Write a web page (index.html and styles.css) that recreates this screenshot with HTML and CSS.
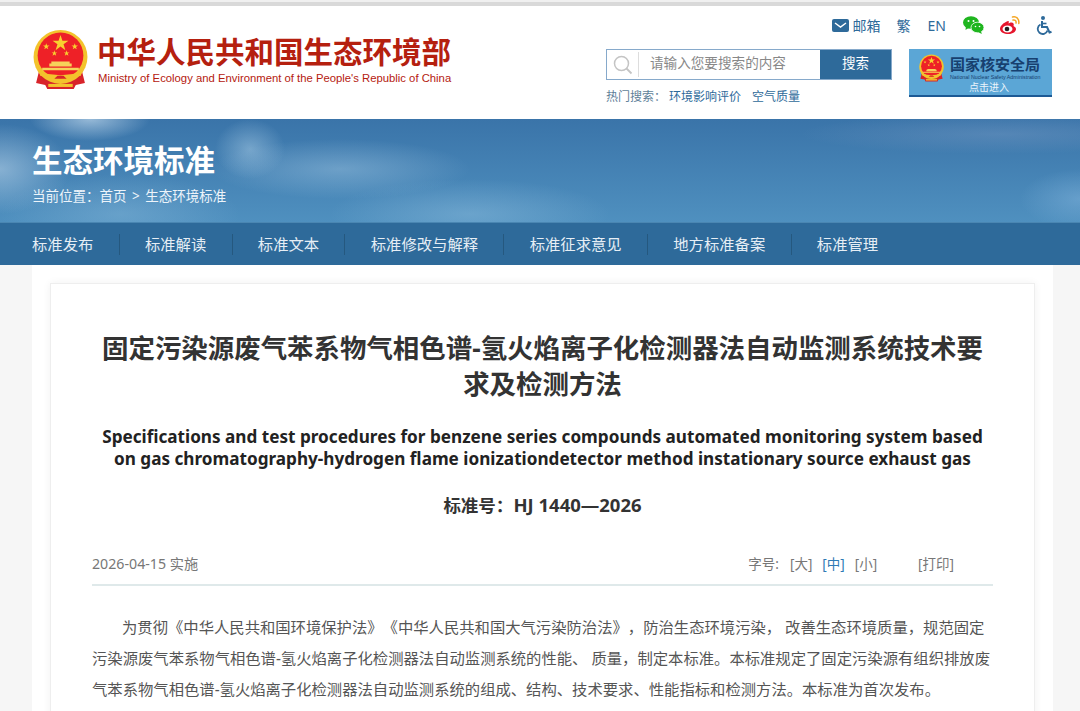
FILE: index.html
```html
<!DOCTYPE html>
<html lang="zh-CN">
<head>
  <meta charset="UTF-8" />
  <title>固定污染源废气苯系物气相色谱-氢火焰离子化检测器法自动监测系统技术要求及检测方法</title>
  <link rel="stylesheet" href="styles.css">
</head>
<body>
  <svg class="defs" width="0" height="0">
    <symbol id="emblem" viewBox="0 0 54 58">
      <path d="M7 36 L3 52 L12 54 L14 58 L40 58 L42 54 L51 52 L47 36 Z" fill="#d8232a"/>
      <circle cx="27" cy="26.500" r="26.500" fill="#f3c32c"/>
      <circle cx="27" cy="25" r="22.500" fill="#ee2127"/>
      <path d="M27 5 l1.900 5.600 h5.900 l-4.800 3.500 1.800 5.700 -4.800 -3.500 -4.800 3.500 1.800 -5.700 -4.800 -3.500 h5.900 Z" fill="#f8d12f"/>
      <path d="M13 13 l.8 2.300 h2.400 l-2 1.400 .8 2.300 -2 -1.400 -2 1.400 .8 -2.300 -2 -1.400 h2.400 Z M41 13 l.8 2.300 h2.400 l-2 1.400 .8 2.300 -2 -1.400 -2 1.400 .8 -2.300 -2 -1.400 h2.400 Z M21 20 l.7 2 h2.100 l-1.700 1.200 .7 2 -1.800 -1.200 -1.800 1.200 .7 -2 -1.700 -1.200 h2.100 Z M33 20 l.7 2 h2.100 l-1.700 1.200 .7 2 -1.800 -1.200 -1.800 1.200 .7 -2 -1.700 -1.200 h2.100 Z" fill="#f8d12f"/>
      <path d="M18 31 h18 v2 h2 v3 h-22 v-3 h2 Z M9 37 h36 v2.500 h-36 Z" fill="#f6d35a"/>
      <path d="M6 41 q21 7 42 0 l-1 4 q-9 1 -13 4 q-7 -4 -14 0 q-4 -3 -13 -4 Z" fill="#f3c32c"/>
      <path d="M24 45 h6 l3 3 h-12 Z" fill="#d8232a"/>
      <path d="M15 53 h24 v3 h-24 Z" fill="#f3c32c"/>
    </symbol>
  </svg>

  <div class="topline"></div>

  <header class="site-head">
    <a class="logo">
      <svg class="logo-mark"><use href="#emblem"/></svg>
      <span class="logo-text">
        <span class="logo-cn">中华人民共和国生态环境部</span>
        <span class="logo-en">Ministry of Ecology and Environment of the People's Republic of China</span>
      </span>
    </a>

    <div class="head-right">
      <div class="tools">
        <a class="tool tool-mail">
          <svg width="17" height="13" viewBox="0 0 17 13"><rect width="17" height="13" rx="2" fill="#2e6a9a"/><path d="M3 4 L8.500 8 L14 4" fill="none" stroke="#fff" stroke-width="1.500"/></svg>
          邮箱
        </a>
        <a class="tool tool-fan">繁</a>
        <a class="tool tool-en">EN</a>
        <a class="tool tool-icon">
          <svg width="21" height="18" viewBox="0 0 21 18">
            <ellipse cx="8" cy="6.500" rx="8" ry="6.300" fill="#1fb51f"/>
            <path d="M3 10 L2.500 14 L7 11 Z" fill="#1fb51f"/>
            <ellipse cx="14.500" cy="11.500" rx="6.500" ry="5.300" fill="#1fb51f" stroke="#fff" stroke-width=".8"/>
            <path d="M18 15 L18.800 18 L15 16 Z" fill="#1fb51f"/>
            <circle cx="5.500" cy="5" r="1" fill="#fff"/><circle cx="10.500" cy="5" r="1" fill="#fff"/>
            <circle cx="12.500" cy="10.500" r=".8" fill="#fff"/><circle cx="16.500" cy="10.500" r=".8" fill="#fff"/>
          </svg>
        </a>
        <a class="tool tool-icon">
          <svg width="20" height="18" viewBox="0 0 20 18">
            <path d="M8 5 C3 7 0 10 0 13 C0 16 4 18 8.500 18 C13 18 16 15.500 16 13 C16 11 14 10.500 13.500 10 C14.500 7.500 13 6 10.500 6.500 L8.500 7.500 C9 5.500 9 4.800 8 5 Z" fill="#e6162d"/>
            <ellipse cx="7.500" cy="13" rx="5" ry="3.500" fill="#fff"/>
            <circle cx="7" cy="13" r="2.300" fill="#222"/>
            <path d="M12.500 1 C16.500 0 19.500 3 18.800 7.500 M13 4 C15 3.500 16.500 5 16 7" fill="none" stroke="#f5a623" stroke-width="1.500" stroke-linecap="round"/>
          </svg>
        </a>
        <a class="tool tool-icon">
          <svg width="16" height="19" viewBox="0 0 16 19">
            <circle cx="7" cy="2" r="2" fill="#2e6a9a"/>
            <path d="M6 5 V11 H11 L13.500 16.500 L15.500 15.700" fill="none" stroke="#2e6a9a" stroke-width="2"/>
            <path d="M6 7.500 H10.500" stroke="#2e6a9a" stroke-width="1.600"/>
            <path d="M4.500 8.500 A5 5 0 1 0 11.500 14.500" fill="none" stroke="#2e6a9a" stroke-width="1.800"/>
          </svg>
        </a>
      </div>

      <div class="search-row">
        <div class="search-col">
          <div class="search">
            <span class="search-icon">
              <svg width="20" height="20" viewBox="0 0 20 20"><circle cx="8.500" cy="8.500" r="7" fill="none" stroke="#c4c4c4" stroke-width="1.500"/><path d="M13.500 13.500 L18.500 18.500" stroke="#c4c4c4" stroke-width="1.800"/></svg>
            </span>
            <span class="search-input">请输入您要搜索的内容</span>
            <span class="search-btn">搜索</span>
          </div>
          <div class="hot">
            <span>热门搜索&#xFF1A;</span>
            <a>环境影响评价</a>
            <a>空气质量</a>
          </div>
        </div>
        <a class="nnsa">
          <svg class="nnsa-mark"><use href="#emblem"/></svg>
          <span class="nnsa-text">
            <span class="nnsa-cn">国家核安全局</span>
            <span class="nnsa-en">National Nuclear Safety Administration</span>
          </span>
          <span class="nnsa-enter">点击进入</span>
        </a>
      </div>
    </div>
  </header>

  <section class="banner">
    <h1>生态环境标准</h1>
    <div class="crumb">当前位置&#xFF1A;首页 <i>&gt;</i> 生态环境标准</div>
  </section>

  <nav class="nav">
    <a>标准发布</a>
    <a>标准解读</a>
    <a>标准文本</a>
    <a>标准修改与解释</a>
    <a>标准征求意见</a>
    <a>地方标准备案</a>
    <a>标准管理</a>
  </nav>

  <main class="wrap">
    <article class="card">
      <h2 class="title">固定污染源废气苯系物气相色谱-氢火焰离子化检测器法自动监测系统技术要求及检测方法</h2>
      <h3 class="title-en">Specifications and test procedures for benzene series compounds automated monitoring system based on gas chromatography-hydrogen flame ionizationdetector method instationary source exhaust gas</h3>
      <div class="code">标准号&#xFF1A;<span class="code-num">HJ 1440—2026</span></div>
      <div class="meta">
        <span>2026-04-15 实施</span>
        <span class="meta-right">
          <span class="size">字号&#58;</span>
          <a class="first">[大]</a>
          <a class="on">[中]</a>
          <a>[小]</a>
          <a class="print">[打印]</a>
        </span>
      </div>
      <p class="body-text">为贯彻《中华人民共和国环境保护法》《中华人民共和国大气污染防治法》&#xFF0C;防治生态环境污染&#xFF0C; 改善生态环境质量&#xFF0C;规范固定污染源废气苯系物气相色谱-氢火焰离子化检测器法自动监测系统的性能、 质量&#xFF0C;制定本标准。本标准规定了固定污染源有组织排放废气苯系物气相色谱-氢火焰离子化检测器法自动监测系统的组成、结构、技术要求、性能指标和检测方法。本标准为首次发布。</p>
    </article>
  </main>
</body>
</html>
```

FILE: styles.css
```css
* {
  box-sizing: border-box;
}

html,
body {
  height: 100%;
}

body {
  margin: 0;
  height: 100vh;
  overflow: hidden;
  background: #f6f6f6;
  color: #333;
  font-family: "Noto Sans", "Noto Sans CJK SC", sans-serif;
  text-spacing-trim: space-all;
}

a {
  color: inherit;
  text-decoration: none;
}

.defs {
  display: block;
  height: 0;
}

.topline {
  height: 6px;
  background: #d9d9d9;
  border-top: 2px solid #f0f0f0;
}

/* head */
.site-head {
  display: flex;
  height: 113px;
  padding: 0 28px 0 33px;
  background: #fff;
}

.logo {
  display: flex;
  align-items: flex-start;
  padding-top: 24px;
}

.logo-mark {
  width: 55px;
  height: 59px;
  flex: none;
}

.logo-text {
  display: flex;
  flex-direction: column;
  margin-left: 10px;
  color: #b5200f;
}

.logo-cn {
  margin-top: 4px;
  margin-left: -1px;
  font-size: 29.500px;
  line-height: 36px;
  font-weight: 700;
  white-space: nowrap;
}

.logo-en {
  margin-top: 1px;
  font-family: "Liberation Sans", sans-serif;
  font-size: 11.300px;
  line-height: 14px;
  white-space: nowrap;
}

.head-right {
  margin-left: auto;
  width: 446px;
}

.tools {
  display: flex;
  justify-content: flex-end;
  align-items: center;
  height: 26px;
  margin-top: 6px;
  margin-bottom: 1px;
  color: #2e6a9a;
  font-size: 14px;
}

.tool {
  display: flex;
  align-items: center;
  gap: 4px;
}

.tool-mail {
  margin-right: 16px;
}

.tool-fan {
  margin-right: 17px;
}

.tool-en {
  margin-right: 17px;
}

.tool-icon {
  margin-right: 16px;
}

.tool-icon:last-child {
  margin-right: 0;
}

.search-row {
  display: flex;
  justify-content: space-between;
  margin-top: 11px;
}

.search-col {
  width: 286px;
}

.search {
  display: flex;
  align-items: center;
  height: 31px;
  border: 1px solid #86a9cb;
}

.search-icon {
  display: flex;
  align-items: center;
  width: 32px;
  height: 25px;
  margin-right: 11px;
  padding-left: 6px;
  border-right: 1px solid #ddd;
}

.search-input {
  flex: 1;
  padding-bottom: 5px;
  color: #888;
  font-size: 13.600px;
}

.search-btn {
  align-self: stretch;
  width: 71px;
  background: #2e6a9a;
  color: #fff;
  font-size: 13.500px;
  line-height: 26px;
  text-align: center;
}

.hot {
  display: flex;
  margin-top: 9px;
  color: #5f7f99;
  font-size: 12px;
  line-height: 16px;
}

.hot a {
  margin-left: 11px;
  color: #2e6a9a;
}

.hot a:first-of-type {
  margin-left: 3px;
}

.nnsa {
  position: relative;
  display: flex;
  width: 143px;
  height: 48px;
  padding: 5px 0 0 10px;
  background: #5ba6d6;
  border-bottom: 2px solid #1d5a95;
}

.nnsa-mark {
  width: 25px;
  height: 28px;
  flex: none;
}

.nnsa-text {
  display: flex;
  flex-direction: column;
  margin-left: 6px;
}

.nnsa-cn {
  color: #17406f;
  font-size: 15px;
  line-height: 20px;
  font-weight: 700;
  white-space: nowrap;
}

.nnsa-en {
  color: #17406f;
  font-family: "Liberation Sans", sans-serif;
  font-size: 5.300px;
  line-height: 7px;
  white-space: nowrap;
}

.nnsa-enter {
  position: absolute;
  left: 60px;
  bottom: 1px;
  color: #eaf4fb;
  font-size: 10px;
  line-height: 13px;
}

/* banner */
.banner {
  height: 103px;
  padding: 20px 0 0 32px;
  color: #fff;
  background:
    radial-gradient(ellipse 60px 22px at 90px 0, rgba(190, 215, 235, .7), transparent),
    radial-gradient(ellipse 70px 45px at 0 50px, rgba(190, 215, 235, .55), transparent),
    radial-gradient(ellipse 35px 30px at 250px 30px, rgba(170, 205, 230, .5), transparent),
    radial-gradient(ellipse 130px 30px at 340px 50px, rgba(170, 205, 230, .4), transparent),
    radial-gradient(ellipse 140px 35px at 470px 95px, rgba(150, 195, 225, .4), transparent),
    radial-gradient(ellipse 120px 40px at 120px 95px, rgba(150, 195, 225, .35), transparent),
    radial-gradient(ellipse 60px 30px at 1080px 80px, rgba(130, 180, 220, .5), transparent),
    radial-gradient(ellipse 200px 20px at 1000px 15px, rgba(130, 160, 200, .35), transparent),
    linear-gradient(#3a74a9, #4f90bf);
}

.banner h1 {
  margin: 0;
  font-size: 30.500px;
  line-height: 42px;
  font-weight: 700;
}

.crumb {
  margin-top: 5px;
  font-size: 13.500px;
  line-height: 20px;
  color: #edf4fa;
}

.crumb i {
  margin: 0 2px;
  font-style: normal;
}

/* nav */
.nav {
  display: flex;
  align-items: center;
  height: 43px;
  padding-left: 32px;
  background: #2e6a9a;
  border-top: 1px solid #4a86b2;
}

.nav a {
  padding: 0 25.300px;
  border-left: 1px solid #25587f;
  color: #e6eef5;
  font-size: 15.330px;
  line-height: 21px;
  white-space: nowrap;
}

.nav a:first-child {
  padding-left: 0;
  border-left: 0;
}

/* content */
.wrap {
  width: 1021px;
  margin-left: 32px;
  padding: 18px 18px 0;
  background: #fff;
}

.card {
  padding: 46px 41px 40px;
  border: 1px solid #eee;
  box-shadow: 0 0 8px rgba(0, 0, 0, .06);
}

.title {
  margin: 0;
  color: #333;
  font-size: 26.450px;
  line-height: 36px;
  font-weight: 700;
  text-align: center;
}

.title-en {
  margin: 24px 0 0;
  color: #222;
  font-size: 17.150px;
  line-height: 22px;
  font-weight: 700;
  text-align: center;
}

.code {
  margin-top: 23px;
  color: #333;
  font-size: 17.500px;
  line-height: 24px;
  font-weight: 700;
  text-align: center;
}

.code-num {
  font-size: 18.500px;
}

.meta {
  display: flex;
  justify-content: space-between;
  height: 46px;
  margin-top: 23px;
  padding-top: 14px;
  border-bottom: 2px solid #dfe9ea;
  color: #777;
  font-size: 14.200px;
  line-height: 20px;
}

.meta-right {
  display: flex;
  padding-right: 39px;
  font-size: 13.500px;
}

.meta-right a {
  margin-left: 10px;
}

.meta-right .first {
  margin-left: 11px;
}

.meta-right .on {
  color: #2e7ab5;
}

.meta-right .print {
  margin-left: 41px;
}

.body-text {
  margin: 26px 0 0;
  color: #555;
  font-size: 15.330px;
  line-height: 31px;
  text-indent: 30px;
}
```
